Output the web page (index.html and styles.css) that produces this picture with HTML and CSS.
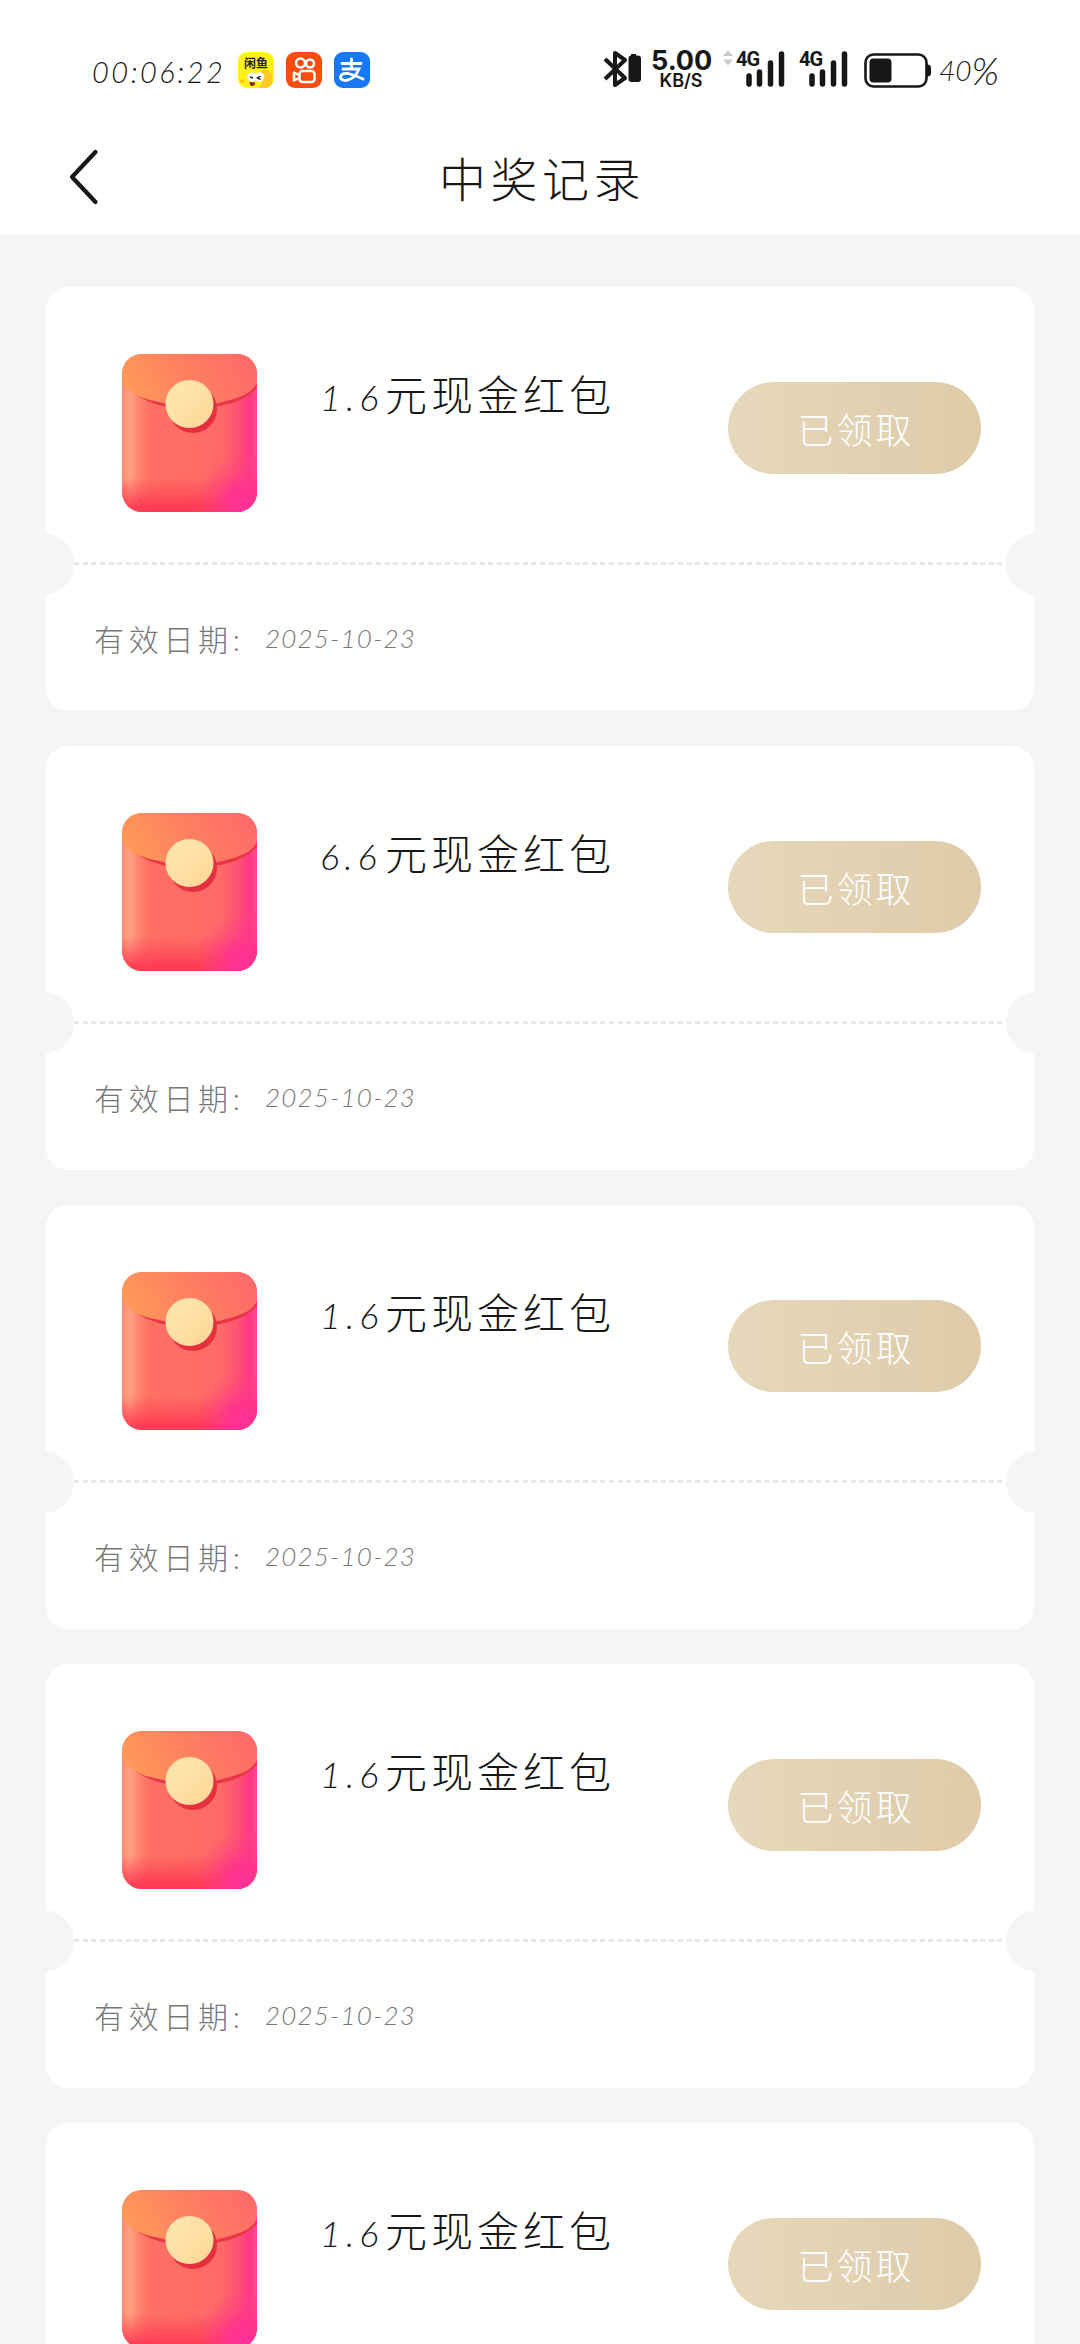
FILE: index.html
```html
<!DOCTYPE html>
<html lang="zh-CN">
<head>
<meta charset="utf-8">
<title>中奖记录</title>
<link rel="stylesheet" href="styles.css">
</head>
<body>
<svg class="defs" width="0" height="0" aria-hidden="true">
  <defs>
    <linearGradient id="body" x1="0" y1="0" x2="1" y2="0"><stop offset="0" stop-color="#ff8d74"/><stop offset=".06" stop-color="#ffa183"/><stop offset=".12" stop-color="#ff8570"/><stop offset=".2" stop-color="#ff7063"/><stop offset=".74" stop-color="#ff6a67"/><stop offset=".86" stop-color="#ff5273"/><stop offset=".95" stop-color="#ff3886"/><stop offset="1" stop-color="#ff4a90"/></linearGradient>
    <linearGradient id="base" x1="0" y1="0" x2="0" y2="1"><stop offset=".78" stop-color="#ff4055" stop-opacity="0"/><stop offset=".97" stop-color="#ff3653" stop-opacity=".9"/><stop offset="1" stop-color="#ff3653" stop-opacity=".9"/></linearGradient>
    <radialGradient id="pink" cx=".9" cy=".97" r=".36"><stop offset="0" stop-color="#ff3098"/><stop offset=".35" stop-color="#ff3292" stop-opacity=".85"/><stop offset="1" stop-color="#ff4080" stop-opacity="0"/></radialGradient>
    <linearGradient id="flap" x1="0" y1=".6" x2="1" y2=".4"><stop offset="0" stop-color="#ff9a58"/><stop offset=".55" stop-color="#ff7d61"/><stop offset="1" stop-color="#ff6b69"/></linearGradient>
    <linearGradient id="coin" x1="0" y1="0" x2="1" y2="1"><stop offset="0" stop-color="#ffe7ae"/><stop offset=".5" stop-color="#ffe0a5"/><stop offset="1" stop-color="#fcd592"/></linearGradient>
    <clipPath id="shape"><rect width="135" height="158" rx="20"/></clipPath>
    <symbol id="envelope" viewBox="0 0 135 158">
      <g clip-path="url(#shape)">
        <rect width="135" height="158" fill="url(#body)"/>
        <rect width="135" height="158" fill="url(#base)"/>
        <rect width="135" height="158" fill="url(#pink)"/>
        <path d="M9 37Q66 67 126 39L135 29V34Q122 49 92 53L45 53Q24 49 9 37Z" fill="#e93646"/>
        <path d="M0 0H135V29Q126 49 68 49.500Q22 50 7 36Q0 30 0 21Z" fill="url(#flap)"/>
      </g>
      <circle cx="71" cy="55" r="24" fill="#e7303f"/>
      <circle cx="67.500" cy="50" r="24" fill="url(#coin)"/>
    </symbol>
    <symbol id="signal" viewBox="0 0 39 36"><path d="M3 25V33M13.500 21V33M24.500 12V33M35.500 3V33" stroke="#171717" stroke-width="5.500" stroke-linecap="round"/></symbol>
  </defs>
</svg>
<div class="screen">
  <header class="top">
    <div class="status">
      <span class="clock">00:06:22</span>
      <div class="apps">
        <svg class="app" viewBox="0 0 36 36"><rect width="36" height="36" rx="9" fill="#fff21a"/><path d="M21 36q6-6 1-17 8-5 12 4v8q-2 5-7 5z" fill="#ffc928"/><circle cx="14" cy="25" r="4.500" fill="#fff"/><circle cx="21.500" cy="25" r="4.800" fill="#fff"/><path d="M12 25l3 1M22.500 24l-3 2 3 1.500" stroke="#222" stroke-width="1.500" fill="none"/><path d="M11.500 30l6 .5q-1 4-4 3.500-2-1-2-4z" fill="#862315"/><circle cx="4" cy="29" r="1.800" fill="#ffb300"/><text x="18" y="15.500" class="fish">闲鱼</text></svg>
        <svg class="app" viewBox="0 0 36 36"><rect width="36" height="36" rx="9" fill="#fa4b10"/><g fill="none" stroke="#fff" stroke-width="2.500" stroke-linejoin="round"><circle cx="14.500" cy="11" r="4.500"/><circle cx="24" cy="11.500" r="4"/><rect x="13.500" y="19" width="15" height="11" rx="3"/><path d="M13 23L8 20.500V28.500L13 26"/></g></svg>
        <svg class="app" viewBox="0 0 36 36"><rect width="36" height="36" rx="9" fill="#1678f5"/><g fill="none" stroke="#fff" stroke-width="2.800" stroke-linecap="round"><path d="M8 11.500H27M17.500 7V16M9 17H25Q21 27 12 28.500Q6 28 6.500 24.500Q8 20.500 14 21.500Q21 23 29 27"/></g></svg>
      </div>
      <div class="indicators">
        <svg class="bt" viewBox="0 0 38 38"><path d="M2 9L22 28L12 35V3L22 10L2 29" fill="none" stroke="#171717" stroke-width="4" stroke-linejoin="round"/><path d="M28 5.500V4h5v1.500h2q3 0 3 3V29q0 3-3 3h-6.500q-3 0-3-3V8.500q0-3 2.500-3z" fill="#171717"/></svg>
        <div class="speed"><b>5.00</b><small>KB/S</small></div>
        <svg class="arrows" viewBox="0 0 12 16"><path d="M1 6L6 0l5 6zM1 9.500h10L6 15.500z" fill="#ccc"/></svg>
        <div class="net"><b>4G</b><svg class="bars"><use href="#signal"/></svg></div>
        <div class="net"><b>4G</b><svg class="bars"><use href="#signal"/></svg></div>
        <svg class="battery" viewBox="0 0 68 36"><rect x="1.500" y="2.500" width="61" height="32" rx="8" fill="none" stroke="#171717" stroke-width="2.600"/><path d="M63 12.500q4 0 4 3v6q0 3-4 3z" fill="#171717"/><rect x="5.500" y="6.500" width="22" height="24" rx="4" fill="#171717"/></svg>
        <span class="level">40<i>%</i></span>
      </div>
    </div>
    <nav class="nav">
      <svg class="back" viewBox="0 0 30 56"><path d="M26.500 3L3 28L26.500 53" fill="none" stroke="#171717" stroke-width="4.200" stroke-linecap="round" stroke-linejoin="round"/></svg>
      <h1>中奖记录</h1>
    </nav>
  </header>
  <main class="list">
    <article class="card"><div class="prize"><svg class="gift"><use href="#envelope"/></svg><h2><span class="num">1.6</span>元现金红包</h2><button class="claimed">已领取</button></div><div class="valid"><span>有效日期:</span><time>2025-10-23</time></div></article>
    <article class="card"><div class="prize"><svg class="gift"><use href="#envelope"/></svg><h2><span class="num">6.6</span>元现金红包</h2><button class="claimed">已领取</button></div><div class="valid"><span>有效日期:</span><time>2025-10-23</time></div></article>
    <article class="card"><div class="prize"><svg class="gift"><use href="#envelope"/></svg><h2><span class="num">1.6</span>元现金红包</h2><button class="claimed">已领取</button></div><div class="valid"><span>有效日期:</span><time>2025-10-23</time></div></article>
    <article class="card"><div class="prize"><svg class="gift"><use href="#envelope"/></svg><h2><span class="num">1.6</span>元现金红包</h2><button class="claimed">已领取</button></div><div class="valid"><span>有效日期:</span><time>2025-10-23</time></div></article>
    <article class="card last"><div class="prize"><svg class="gift"><use href="#envelope"/></svg><h2><span class="num">1.6</span>元现金红包</h2><button class="claimed">已领取</button></div></article>
  </main>
</div>
</body>
</html>
```
FILE: styles.css
```css
* { box-sizing: border-box; }
body { margin: 0; background: #f5f5f5; color: #171717; font-family: Lato, "Noto Sans CJK SC", sans-serif; font-weight: 300; }
svg { display: block; flex: none; }
.defs { position: absolute; }
.screen { width: 1080px; height: 2344px; overflow: hidden; background: #f5f5f5; }
.top { height: 235px; background: #fff; }
.status { display: flex; height: 123px; padding: 50px 0 0 92px; white-space: nowrap; }
.clock { width: 146px; padding-top: 3px; font-size: 29px; line-height: 38px; font-style: italic; letter-spacing: 2.500px; }
.apps { display: flex; gap: 12px; padding-top: 2px; }
.app { width: 36px; height: 36px; }
.fish { font: 700 12px "Noto Sans CJK SC", sans-serif; text-anchor: middle; fill: #222; }
.indicators { display: flex; margin-left: 233px; }
.bt { width: 38px; height: 38px; }
.speed { width: 60px; margin-left: 10px; text-align: center; font-family: Inter, sans-serif; }
.speed b { display: block; height: 21px; font-size: 27px; line-height: 22px; font-weight: 700; }
.speed small { display: block; font-size: 18px; line-height: 20px; font-weight: 600; }
.arrows { width: 12px; height: 16px; margin-left: 11px; }
.net { display: grid; width: 49px; margin: 0 0 0 2px; }
.net + .net { margin-left: 14px; }
.net b { grid-area: 1 / 1; font: 700 20px/18px "Roboto", sans-serif; letter-spacing: -1px; }
.bars { grid-area: 1 / 1; width: 39px; height: 36px; margin: 1px 0 0 10px; }
.battery { width: 68px; height: 36px; margin: 2px 0 0 16px; }
.level { display: flex; align-items: center; height: 40px; margin-left: 7px; font-size: 28px; font-style: italic; }
.level i { font-size: 38px; line-height: 40px; }
.nav { display: grid; grid-template-columns: 70px 1fr 70px; height: 112px; }
.back { width: 30px; height: 56px; margin: 26px 0 0 69px; }
h1 { grid-column: 2; margin: 27px 0 0; padding-left: 4px; text-align: center; font-size: 47px; line-height: 58px; font-weight: 300; letter-spacing: 4.500px; }
.list { display: flex; flex-direction: column; gap: 35px; padding: 52px 46px 0; }
.card { flex: none; height: 424px; border-radius: 22px; background: radial-gradient(circle at -3px 277px, #f5f5f5 30.500px, transparent 31.500px), radial-gradient(circle at 991px 277px, #f5f5f5 30.500px, transparent 31.500px), #fff; }
.last { height: 278px; }
.prize { display: flex; height: 278px; margin: 0 28px; padding: 67px 25px 0 48px; background: repeating-linear-gradient(90deg, #e8e8e8 0 5px, transparent 5px 8.630px) 0 275px / 100% 3px no-repeat; }
.gift { width: 135px; height: 158px; }
h2 { flex: 1; margin: 13px 0 0 63px; font-size: 42px; line-height: 56px; font-weight: 300; letter-spacing: 4px; white-space: nowrap; }
.num { display: inline-block; width: 65px; font-size: 36px; font-style: italic; letter-spacing: 5px; }
.claimed { width: 253px; height: 92px; margin: 28px 0 0; padding: 0 0 0 3px; border: 0; border-radius: 46px; background: linear-gradient(90deg, #e6d8bb, #decba9); color: #fff; font: 300 36px/48px "Noto Sans CJK SC", sans-serif; letter-spacing: 3px; }
.valid { display: flex; align-items: center; height: 146px; padding: 0 48px; color: #777; font-size: 30px; }
.valid span { width: 171px; letter-spacing: 4.700px; }
time { font-size: 26px; font-style: italic; letter-spacing: 1.200px; }
```
